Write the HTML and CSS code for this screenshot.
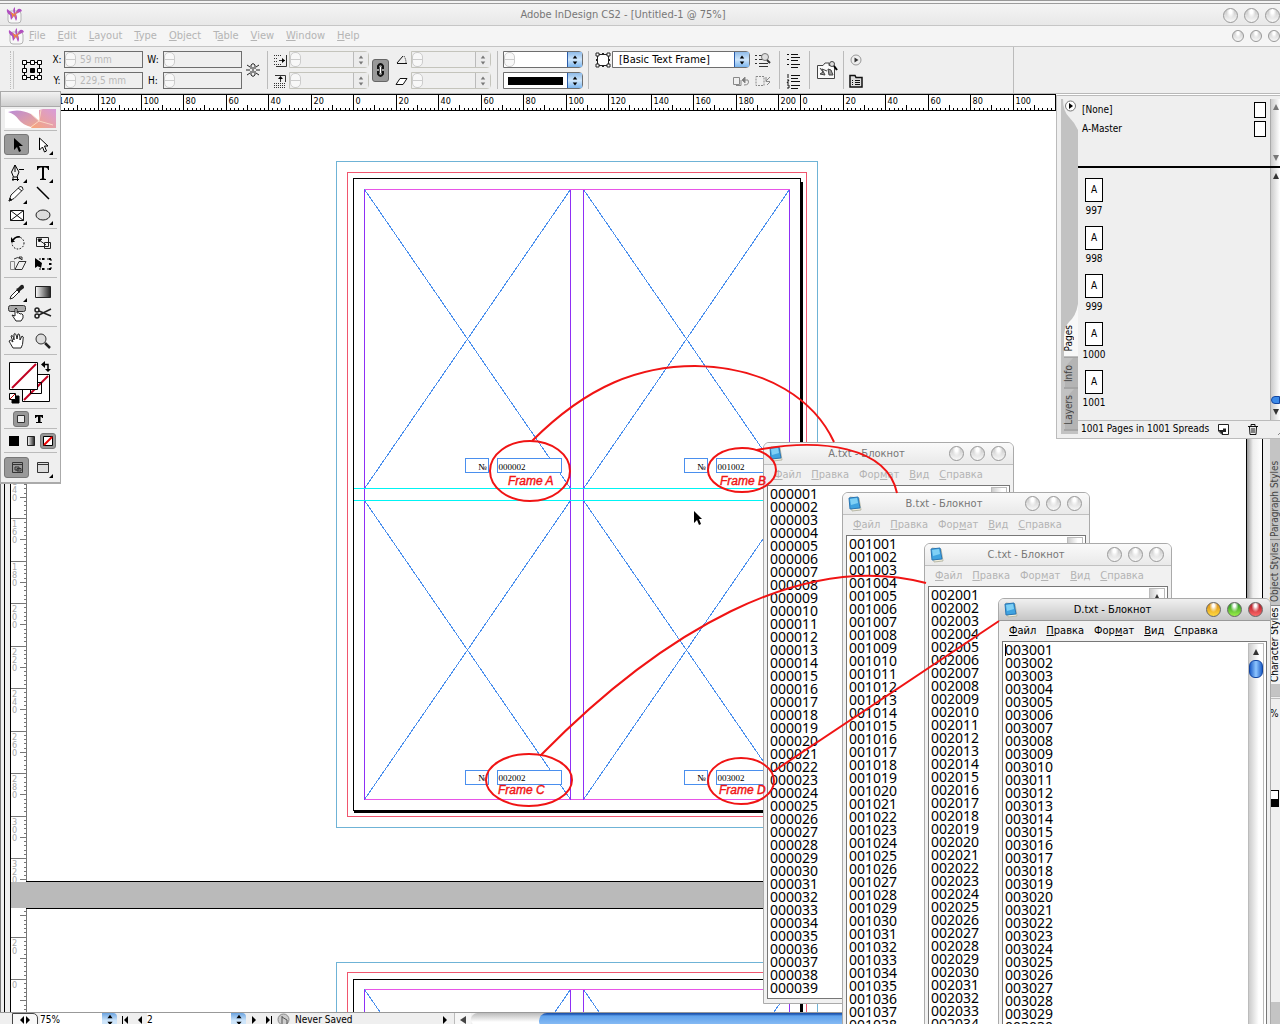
FILE: index.html
```html
<!DOCTYPE html>
<html lang="en">
<head>
<meta charset="utf-8">
<title>Adobe InDesign CS2 - [Untitled-1 @ 75%]</title>
<link rel="stylesheet" href="styles.css">
</head>
<body>
<svg class="defs" aria-hidden="true">
  <defs>
    <linearGradient id="metal" x1="0" y1="0" x2="1" y2="0"><stop offset="0" stop-color="#fff"/><stop offset="1" stop-color="#222"/></linearGradient>
    <linearGradient id="wing" x1="0" y1="0" x2="1" y2="1"><stop offset="0" stop-color="#b98ad8"/><stop offset="1" stop-color="#f3a98c"/></linearGradient>
    <linearGradient id="wing2" x1="0" y1="1" x2="1" y2="0"><stop offset="0" stop-color="#f7a677"/><stop offset="1" stop-color="#d79bdc"/></linearGradient>
    <symbol id="butterfly" viewBox="0 0 17 17">
      <rect x="2" y="4" width="13" height="12" rx="3" fill="#f8f8f8" stroke="#b5b5b5"/>
      <path d="M8 7L1 2Q0 6 4 8L5 13L8 9L10 14Q12 11 10 7L16 4Q15 1 12 2L9 6L9 0Q6 2 8 7Z" fill="#b04fc0"/>
      <path d="M8 7L4 5L6 8L6 11L8 8L10 11L9.500 7L13 4L9 6Z" fill="#f08a3c"/>
    </symbol>
    <symbol id="notepad" viewBox="0 0 16 16">
      <path d="M3 1L12 2L14 14L5 15Z" fill="#f4f0dc" stroke="#b9b9a8"/>
      <path d="M2 2L11 1L13 12L3 13Z" fill="#3fa3e0" stroke="#2a76b4"/>
      <path d="M3 3L10 2L11 7L4 9Z" fill="#7fd0f5"/>
    </symbol>
    <symbol id="up" viewBox="0 0 8 8"><path d="M4 1L7 7H1Z"/></symbol>
    <symbol id="updown" viewBox="0 0 8 14"><path d="M4 1L7 5H1ZM4 13L1 9H7Z"/></symbol>
    <symbol id="corner" viewBox="0 0 20 20"><path d="M20 16V20H16Z"/></symbol>
  </defs>
</svg>

<main class="app">
  <header class="title-bar">
    <svg class="app-icon"><use href="#butterfly"/></svg>
    <h1>Adobe InDesign CS2 - [Untitled-1 @ 75%]</h1>
    <div class="orbs"><button aria-label="Minimize"></button><button aria-label="Maximize"></button><button aria-label="Close"></button></div>
  </header>
  <nav class="menu-bar">
    <svg class="app-icon"><use href="#butterfly"/></svg>
    <a href="#"><u>F</u>ile</a><a href="#"><u>E</u>dit</a><a href="#"><u>L</u>ayout</a><a href="#"><u>T</u>ype</a><a href="#"><u>O</u>bject</a><a href="#">T<u>a</u>ble</a><a href="#"><u>V</u>iew</a><a href="#"><u>W</u>indow</a><a href="#"><u>H</u>elp</a>
    <div class="orbs small"><button aria-label="Minimize document"></button><button aria-label="Restore document"></button><button aria-label="Close document"></button></div>
  </nav>

  <section class="control-bar">
    <div class="grip both"></div>
    <svg class="both" width="20" height="20" fill="#fff" stroke="#000"><path d="M2.500 2.500H17.500V17.500H2.500Z" fill="none"/><path d="M.5 .5h4v4h-4zM8.500 .5h4v4h-4zM15.500 .5h4v4h-4zM.5 8.500h4v4h-4zM15.500 8.500h4v4h-4zM.5 15.500h4v4h-4zM8.500 15.500h4v4h-4zM15.500 15.500h4v4h-4z"/><path d="M8.500 8.500h4v4h-4z" fill="#000"/></svg>
    <label for="px">X:</label>
    <label for="py">Y:</label>
    <div class="field"><i></i><input id="px" value="59 mm"></div>
    <div class="field"><i></i><input id="py" value="229,5 mm"></div>
    <label for="pw">W:</label>
    <label for="ph">H:</label>
    <div class="field"><i></i><input id="pw"></div>
    <div class="field"><i></i><input id="ph"></div>
    <svg class="both" width="14" height="16" fill="none" stroke="#222"><path d="M5 7V3Q7 0 9 3V7M5 9V13Q7 16 9 13V9M7 5V11M1 3L4 5M13 3L10 5M0 8H4M10 8H14M1 13L4 11M13 13L10 11"/></svg>
    <hr class="both">
    <svg width="14" height="14" fill="none" stroke="#333"><path d="M1 2.500H9M1 5.500H5M1 8.500H5M1 11.500H9" stroke-dasharray="1 1"/><path d="M13.500 2V13.500H3M6 7.500H12"/><path d="M9 5L12 7.500L9 10Z" fill="#000" stroke="none"/></svg>
    <svg width="14" height="14" fill="none" stroke="#333"><path d="M1 9.500H13M1 11.500H13M1 13.500H13" stroke-dasharray="1 1"/><path d="M2 1.500H12.500V8M7.500 8V3"/><path d="M7.500 2L10 5H5Z" fill="#000" stroke="none"/></svg>
    <div class="field pale step"><i></i><input aria-label="Scale X"><svg><use href="#updown"/></svg></div>
    <div class="field pale step"><i></i><input aria-label="Scale Y"><svg><use href="#updown"/></svg></div>
    <button class="link both" aria-label="Constrain proportions"><svg width="9" height="14" fill="none"><path d="M2 6V3Q4.500 -1 7 3V6M2 8V11Q4.500 15 7 11V8M4.500 4V10" stroke="#111" stroke-width="2"/><path d="M4.500 4V10" stroke="#fff"/></svg></button>
    <svg width="13" height="12" fill="none" stroke="#111"><path d="M2 9.500H12M2 9L8 2"/><path d="M9 2Q11 5 11 9" stroke-dasharray="1 1"/></svg>
    <svg width="13" height="12" fill="#fff" stroke="#111"><path d="M1 9.500L5 3.500H12L8 9.500Z"/></svg>
    <div class="field pale step"><i></i><input aria-label="Rotation"><svg><use href="#updown"/></svg></div>
    <div class="field pale step"><i></i><input aria-label="Shear"><svg><use href="#updown"/></svg></div>
    <hr class="both">
    <div class="field blue"><i></i><input aria-label="Stroke weight"><svg><use href="#updown"/></svg></div>
    <div class="field blue stroke-type"><select aria-label="Stroke type"><option label=" "></option></select><svg><use href="#updown"/></svg></div>
    <hr class="both">
    <svg width="16" height="16" fill="#fff" stroke="#222"><path d="M2.500 2.500H13.500V13.500H2.500Z"/><path d="M1 1h3v3H1zM12 1h3v3h-3zM1 12h3v3H1zM12 12h3v3h-3zM7 1.500h2M7 14.500h2M1.500 7v2M14.500 7v2"/></svg>
    <span></span>
    <div class="field blue"><select aria-label="Object style"><option>[Basic Text Frame]</option></select><svg><use href="#updown"/></svg></div>
    <svg class="end" width="18" height="14" fill="none" stroke="#888"><path d="M1.500 3.500h6v7h-6zM4 11.500H9V6M11 6H16Q18 11 12 11"/><path d="M13 3L10 6L13 9Z" fill="#777"/></svg>
    <svg width="18" height="16" fill="none" stroke="#333"><path d="M1 3.500h2M5 3.500h5M1 7.500h2M5 7.500h6M1 11.500h2M5 11.500h9M5 14.500h9"/><circle cx="11" cy="5" r="3.500" fill="#ddd" stroke="#777"/><path d="M13 8L16 11" stroke-width="2"/></svg>
    <svg width="18" height="14" fill="none" stroke="#888"><path d="M2 2.500H10V11.500H2Z" stroke-dasharray="2 1"/><path d="M16 3L12 7M12 3V7.500H16M13 11L16 8"/></svg>
    <hr class="both">
    <svg width="16" height="16" fill="none" stroke="#111"><path d="M1 2.500h2M5 2.500h7M5 5.500h9M1 7.500h2M5 8.500h7M1 12.500h2M5 12.500h9M5 15.500h7"/></svg>
    <svg width="16" height="16" fill="none" stroke="#111"><path d="M2 1v4M1 7h2l-2 3h2M1 12h2v3H1M5 2.500h9M5 5.500h7M5 8.500h9M5 12.500h9M5 15.500h7"/></svg>
    <hr class="both">
    <svg class="both" width="22" height="20" fill="none" stroke="#444"><path d="M1.500 5.500H7L9 3H13V5.500H18.500V18.500H1.500Z" fill="#fafafa"/><path d="M4 8L7 12L4 14L9 15L6 9L11 11M12 9L13 15H17L15 10Z" fill="#999"/><circle cx="16" cy="4" r="2.500" fill="#ddd"/><path d="M18 6L21 10" stroke="#000" stroke-width="2"/></svg>
    <hr class="both">
    <svg width="12" height="12"><circle cx="6" cy="6" r="5" fill="#eee" stroke="#999"/><path d="M4.500 3.500V8.500L8.500 6Z" fill="#333"/></svg>
    <svg width="14" height="14" fill="#ddd" stroke="#111"><path d="M1 2.500V13H13V3.500H7L6 1.500H1Z" stroke-width="1.500"/><path d="M3 6.500h1M6 6.500h5M3 8.500h1M6 8.500h5M3 10.500h1M6 10.500h5"/></svg>
    <div class="bar-end both"></div>
  </section>

  <section class="document">
    <svg class="ruler-h" id="rulerH"></svg>
    <svg class="ruler-v" id="rulerV"></svg>
    <div class="canvas">
      <svg class="spread" shape-rendering="crispEdges" fill="none">
        <g transform="translate(-25.500 -110.500)">
          <g id="page">
            <path d="M336 161H817V827H336Z" stroke="#6fb3d6"/>
            <path d="M347 172H806V816H347Z" stroke="#f0566e"/>
            <path d="M353 178H800V810H353Z" stroke="#000"/>
            <path d="M353 811H802M801 181V811" stroke="#000" stroke-width="3"/>
            <path d="M364 189L570 488M570 189L364 488M583 189L789 488M789 189L583 488M364 500L570 799M570 500L364 799M583 500L789 799M789 500L583 799" stroke="#4a8fee"/>
            <path d="M364 189H789M364 799H789" stroke="#e755e7"/>
            <path d="M364 189V799M570 189V799M583 189V799M789 189V799" stroke="#8f2ff5"/>
          </g>
          <path d="M353 488H800M353 500H800" stroke="#00f4f4"/>
          <g stroke="#4a8fee" fill="#fff">
            <path d="M465 458H488V472H465ZM497 458H561V472H497ZM684 458H707V472H684ZM716 458H780V472H716ZM465 770H488V784H465ZM497 770H561V784H497ZM684 770H707V784H684ZM716 770H780V784H716Z"/>
          </g>
          <g class="serial">
            <text x="478" y="469">№</text><text x="498" y="469">000002</text>
            <text x="697" y="469">№</text><text x="717" y="469">001002</text>
            <text x="478" y="780">№</text><text x="498" y="780">002002</text>
            <text x="697" y="780">№</text><text x="717" y="780">003002</text>
          </g>
          <path d="M0 881H2000V908H0Z" fill="#bababa" stroke="#000"/>
          <g>
            <path d="M336 1100V962H817V1100" stroke="#6fb3d6"/>
            <path d="M347 1100V972H806V1100" stroke="#f0566e"/>
            <path d="M353 1100V979H800V1100" stroke="#000"/>
            <path d="M801 982V1100" stroke="#000" stroke-width="3"/>
            <path d="M364 989L570 1288M570 989L364 1288M583 989L789 1288M789 989L583 1288" stroke="#4a8fee"/>
            <path d="M364 989H789" stroke="#e755e7"/>
            <path d="M364 989V1100M570 989V1100M583 989V1100M789 989V1100" stroke="#8f2ff5"/>
          </g>
        </g>
      </svg>
    </div>
    <div class="doc-scroll"></div>
  </section>

  <footer class="status-bar">
    <button class="splitter" aria-label="Split"><svg width="12" height="10"><path d="M5 1V9L1 5ZM7 1V9L11 5Z"/></svg></button>
    <input class="zoom" aria-label="Zoom" value="75%">
    <button class="combo" aria-label="Zoom levels"><svg><use href="#updown"/></svg></button>
    <button aria-label="First page"><svg width="8" height="8"><path d="M1 0H2V8H1ZM7 0V8L3 4Z"/></svg></button>
    <button aria-label="Previous page"><svg width="6" height="8"><path d="M5 0V8L1 4Z"/></svg></button>
    <input class="page-no" aria-label="Page" value="2">
    <button class="combo" aria-label="Page list"><svg><use href="#updown"/></svg></button>
    <button aria-label="Next page"><svg width="6" height="8"><path d="M1 0V8L5 4Z"/></svg></button>
    <button aria-label="Last page"><svg width="8" height="8"><path d="M1 0V8L5 4ZM6 0H7V8H6Z"/></svg></button>
    <svg class="state" width="13" height="13"><circle cx="6.500" cy="6.500" r="5.500" fill="#ccc" stroke="#888"/><path d="M5 3V12M5 4L10 7V12" fill="none" stroke="#555"/></svg>
    <span class="saved">Never Saved</span>
    <button aria-label="Status menu"><svg width="6" height="8"><path d="M1 0V8L5 4Z"/></svg></button>
    <button class="scroll-left" aria-label="Scroll left"><svg width="8" height="8"><path d="M7 0V8L1 4Z" fill="#444"/></svg></button>
    <div class="h-track"><div class="h-thumb"></div></div>
  </footer>
</main>

<aside class="side-dock">
  <span class="tab">Paragraph Styles</span>
  <span class="tab">Object Styles</span>
  <span class="tab active">Character Styles</span>
  <div class="dock-body"><span>%</span><i></i></div>
</aside>

<aside class="pages-panel">
  <div class="tabs">
    <svg viewBox="0 0 17 335">
      <path d="M0 0H17V335H0Z" fill="#c2c2c2"/>
      <path d="M2 0H17V31Q14 24 8 18Q2 12 2 0Z" fill="#efefef"/>
      <path d="M17 205Q15 217 8 223Q3 228 3 238V258H17Z" fill="#f8f8f8"/>
      <path d="M3 258H17M3 289H17M3 331H17" stroke="#888"/>
      <path d="M4 268L12 259H17V288H4Z" fill="#b4b4b4"/><path d="M4 300L13 290H17V330H4Z" fill="#b4b4b4"/>
      <circle cx="9.500" cy="7" r="5" fill="#fff" stroke="#777"/><path d="M8 4V10L12 7Z"/>
    </svg>
    <span class="t-pages">Pages</span><span class="t-info">Info</span><span class="t-layers">Layers</span>
  </div>
  <div class="masters">
    <div><span>[None]</span><b></b></div>
    <div><span>A-Master</span><b></b></div>
  </div>
  <ul class="spreads">
    <li><b>A</b>997</li><li><b>A</b>998</li><li><b>A</b>999</li><li><b>A</b>1000</li><li><b>A</b>1001</li>
  </ul>
  <div class="strip s1"><svg><use href="#up"/></svg><svg class="flip"><use href="#up"/></svg></div>
  <div class="strip s2"><svg><use href="#up"/></svg><i></i><svg class="flip"><use href="#up"/></svg></div>
  <div class="panel-foot">
    <span>1001 Pages in 1001 Spreads</span>
    <button aria-label="New page"><svg width="11" height="11"><path d="M1 .5H10.500V10.500H4L.5 7V.5Z" fill="#fff" stroke="#222"/><path d="M5 4.500H8V8H5ZM0 6H5V11Z" fill="#222"/></svg></button>
    <button aria-label="Delete page"><svg width="12" height="12" fill="none" stroke="#111"><path d="M1 3.500H11M4 3V1.500H8V3M2.500 4L3 11.500H9L9.500 4M5 5V10M7 5V10"/></svg></button>
    <svg class="sizer" width="11" height="11" stroke="#888"><path d="M1 11L11 1M6 11L11 6"/></svg>
  </div>
</aside>

<aside class="toolbox">
  <div class="tb-title"></div>
  <svg class="logo" viewBox="0 0 51 19"><rect width="51" height="19" fill="#fff"/><path d="M3 3Q14 -1 26 5L34 12L26 18Q18 16 14 11Q10 5 3 3Z" fill="url(#wing)"/><path d="M34 12L34 1L38 0H51V19H26L28 15Z" fill="url(#wing2)"/><path d="M26 5L34 12L36 1M34 12L26 18M34 12L48 16" stroke="#f9d6c4" fill="none"/></svg>
  <div class="tools">
    <button class="on" aria-label="Selection"><svg viewBox="0 0 20 20"><path d="M7 3V15L10 12L12 17L14 16L12 11H16Z"/></svg></button>
    <button aria-label="Direct selection"><svg viewBox="0 0 20 20"><path d="M6.500 3V15L9.500 12L11.500 17L13.500 16L11.500 11H15Z" fill="#fff" stroke="#000"/><use href="#corner"/></svg></button>
  </div>
  <div class="tools">
    <button aria-label="Pen"><svg viewBox="0 0 20 20" fill="none" stroke="#000"><path d="M8 2L4.500 9L6.500 14H10L12 9ZM8 2V9M6 14V18M10.500 14V18M5 16.500H12M12 6.500H17" /><use href="#corner" fill="#000" stroke="none"/></svg></button>
    <button aria-label="Type"><svg viewBox="0 0 20 20"><path d="M4 3H16V7H15Q15 4.500 12 4.500H11V15Q11 16 13 16V17H7V16Q9 16 9 15V4.500H8Q5 4.500 5 7H4Z"/><use href="#corner"/></svg></button>
    <button aria-label="Pencil"><svg viewBox="0 0 20 20"><path d="M2 17L4 11L13 2.500Q16 2 16 5.500L7 14.500Z" fill="#fff" stroke="#222"/><path d="M2 17L3 14L5 16ZM11 4L15 7" stroke="#222"/><use href="#corner"/></svg></button>
    <button aria-label="Line"><svg viewBox="0 0 20 20"><path d="M4 3L16 15" stroke="#000" stroke-width="1.500"/></svg></button>
    <button aria-label="Frame"><svg viewBox="0 0 20 20"><path d="M3.500 5.500H16.500V15.500H3.500ZM3.500 5.500L16.500 15.500M16.500 5.500L3.500 15.500" fill="#fff" stroke="#111"/><use href="#corner"/></svg></button>
    <button aria-label="Ellipse"><svg viewBox="0 0 20 20"><ellipse cx="10" cy="10" rx="7" ry="5" fill="#ddd" stroke="#222"/><use href="#corner"/></svg></button>
  </div>
  <div class="tools">
    <button aria-label="Rotate"><svg viewBox="0 0 20 20" fill="none" stroke="#000"><circle cx="11" cy="10" r="6" stroke-dasharray="1.500 1.500"/><path d="M6 7Q9 3 13 4" stroke-width="1.500"/><path d="M4 4V9H8Z" fill="#000" stroke="none"/></svg></button>
    <button aria-label="Scale"><svg viewBox="0 0 20 20" fill="none" stroke="#222"><path d="M3.500 4.500H15.500V13.500H3.500Z" fill="#f4f4f4"/><path d="M11.500 9.500H17.500V15.500H11.500ZM6 7L13 12"/><path d="M5 6H9L6 9Z" fill="#000"/></svg></button>
    <button aria-label="Shear"><svg viewBox="0 0 20 20" fill="none" stroke="#333"><path d="M3.500 7.500H7.500V15.500H3.500Z" stroke="#888"/><path d="M8 15.500L12 7.500H19L15 15.500Z"/><path d="M7 5Q11 2 14 5M12 3L15 6V3Z"/></svg></button>
    <button aria-label="Free transform"><svg viewBox="0 0 20 20"><path d="M6 5H18V15H6Z" fill="none" stroke="#000" stroke-dasharray="2 2"/><path d="M2 4V14L5 12L8 14L9 9ZM9 4h2v2H9zM16 4h2v2h-2zM16 14h2v2h-2zM9 14h2v2H9zM16 9h2v2h-2z"/></svg></button>
  </div>
  <div class="tools">
    <button aria-label="Eyedropper"><svg viewBox="0 0 20 20"><path d="M3 17L4 14L10 8L12 10L6 16Z" fill="#fff" stroke="#222"/><path d="M9 7L11 6L14 3Q17 2 17 6L13 9L13 11Z" fill="#222"/><use href="#corner"/></svg></button>
    <button aria-label="Gradient"><svg viewBox="0 0 20 20"><path d="M2.500 4.500H17.500V15.500H2.500Z" fill="url(#metal)" stroke="#222"/></svg></button>
    <button aria-label="Button"><svg viewBox="0 0 20 20"><rect x="1.500" y="2.500" width="17" height="6" rx="2" fill="#aaa" stroke="#333"/><path d="M5 12L8 13V6Q9 4 10 6V10Q12 9 13 11Q15 10 16 12V15L14 18H9Z" fill="#fff" stroke="#222"/></svg></button>
    <button aria-label="Scissors"><svg viewBox="0 0 20 20" fill="none" stroke="#222" stroke-width="1.500"><circle cx="4" cy="7" r="2"/><circle cx="4" cy="13" r="2"/><path d="M6 8L18 13M6 12L18 6"/></svg></button>
  </div>
  <div class="tools">
    <button aria-label="Hand"><svg viewBox="0 0 20 20"><path d="M6 17Q3 12 2 10Q3 8 6 11L4 5Q6 3 7 9L7 3Q9 1 10 8L11 3Q13 2 13 9L15 5Q17 5 16 9Q16 14 14 17Z" fill="#fff" stroke="#222"/></svg></button>
    <button aria-label="Zoom"><svg viewBox="0 0 20 20"><circle cx="8" cy="8" r="5" fill="#ddd" stroke="#333"/><path d="M12 12L17 17" stroke="#222" stroke-width="2.500"/></svg></button>
  </div>
  <div class="fill-stroke">
    <svg viewBox="0 0 46 46" stroke="#000" fill="#fff"><path d="M14.500 14.500H41.500V41.500H14.500Z"/><path d="M16 40L40 16" stroke="#c00020" stroke-width="2"/><path d="M22.500 22.500H33.500V33.500H22.500Z" fill="none"/><path d="M1.500 2.500H29.500V29.500H1.500Z"/><path d="M4 28L28 4" stroke="#c00020" stroke-width="2"/><path d="M36 4.500H40V11" fill="none" stroke-width="1.500"/><path d="M33 4.500L37 1V8ZM40 12L37 9H43Z" fill="#000" stroke="none"/><path d="M4 36H11V43H4Z" fill="#000"/><path d="M1.500 33.500H7.500V39.500H1.500Z"/><path d="M2 39L7 34" stroke="#c00"/></svg>
  </div>
  <div class="pair"><button class="on" aria-label="Format container"><svg viewBox="0 0 14 14"><path d="M3.500 3.500H10.500V10.500H3.500Z" fill="#eee" stroke="#333"/></svg></button><button aria-label="Format text"><svg viewBox="0 0 14 14"><path d="M3 3H11V6H10Q10 4.500 8.500 4.500V10H10V11H4V10H6V4.500Q4 4.500 4 6H3Z"/></svg></button></div>
  <div class="trio"><button aria-label="Color"><svg viewBox="0 0 14 14"><path d="M2 2H12V12H2Z"/></svg></button><button aria-label="Apply gradient"><svg viewBox="0 0 14 14"><path d="M3.500 2.500H10.500V11.500H3.500Z" fill="url(#metal)" stroke="#222"/></svg></button><button class="on" aria-label="None"><svg viewBox="0 0 14 14"><path d="M2.500 2.500H11.500V11.500H2.500Z" fill="#fff" stroke="#000"/><path d="M3 11L11 3" stroke="#e00" stroke-width="2"/></svg></button></div>
  <div class="tools view">
    <button class="on" aria-label="Normal view"><svg viewBox="0 0 20 20" fill="none" stroke="#333"><path d="M5.500 4.500H15.500V14.500H5.500ZM5 6.500H16M8 9H12V12H8ZM10 10.500H14V13H10Z"/></svg></button>
    <button aria-label="Preview"><svg viewBox="0 0 20 20"><path d="M4.500 4.500H15.500V14.500H4.500Z" fill="#ddd" stroke="#333"/><path d="M4 6.500H16" stroke="#333"/><use href="#corner"/></svg></button>
  </div>
</aside>

<section class="note note-a">
  <header><svg class="note-icon"><use href="#notepad"/></svg><h2>A.txt - Блокнот</h2><div class="orbs"><button aria-label="Minimize"></button><button aria-label="Maximize"></button><button aria-label="Close"></button></div></header>
  <nav><a href="#"><u>Ф</u>айл</a><a href="#"><u>П</u>равка</a><a href="#">Фор<u>м</u>ат</a><a href="#"><u>В</u>ид</a><a href="#"><u>С</u>правка</a></nav>
  <div class="note-body"><textarea aria-label="A.txt" data-from="1" data-count="39"></textarea><div class="v-scroll"><svg><use href="#up"/></svg></div></div>
</section>
<section class="note note-b">
  <header><svg class="note-icon"><use href="#notepad"/></svg><h2>B.txt - Блокнот</h2><div class="orbs"><button aria-label="Minimize"></button><button aria-label="Maximize"></button><button aria-label="Close"></button></div></header>
  <nav><a href="#"><u>Ф</u>айл</a><a href="#"><u>П</u>равка</a><a href="#">Фор<u>м</u>ат</a><a href="#"><u>В</u>ид</a><a href="#"><u>С</u>правка</a></nav>
  <div class="note-body"><textarea aria-label="B.txt" data-from="1001" data-count="38"></textarea><div class="v-scroll"><svg><use href="#up"/></svg></div></div>
</section>
<section class="note note-c">
  <header><svg class="note-icon"><use href="#notepad"/></svg><h2>C.txt - Блокнот</h2><div class="orbs"><button aria-label="Minimize"></button><button aria-label="Maximize"></button><button aria-label="Close"></button></div></header>
  <nav><a href="#"><u>Ф</u>айл</a><a href="#"><u>П</u>равка</a><a href="#">Фор<u>м</u>ат</a><a href="#"><u>В</u>ид</a><a href="#"><u>С</u>правка</a></nav>
  <div class="note-body"><textarea aria-label="C.txt" data-from="2001" data-count="34"></textarea><div class="v-scroll"><svg><use href="#up"/></svg></div></div>
</section>
<section class="note note-d current">
  <header><svg class="note-icon"><use href="#notepad"/></svg><h2>D.txt - Блокнот</h2><div class="orbs"><button aria-label="Minimize"></button><button aria-label="Maximize"></button><button aria-label="Close"></button></div></header>
  <nav><a href="#"><u>Ф</u>айл</a><a href="#"><u>П</u>равка</a><a href="#">Фор<u>м</u>ат</a><a href="#"><u>В</u>ид</a><a href="#"><u>С</u>правка</a></nav>
  <div class="note-body"><textarea aria-label="D.txt" data-from="3001" data-count="30"></textarea><div class="v-scroll"><svg><use href="#up"/></svg><i></i></div></div>
</section>

<svg class="callouts">
  <g fill="none" stroke="#f01414" stroke-width="2">
    <ellipse cx="530" cy="471" rx="40" ry="30"/>
    <ellipse cx="742" cy="470" rx="34" ry="22"/>
    <ellipse cx="529" cy="780" rx="43" ry="26"/>
    <ellipse cx="741" cy="781" rx="33" ry="23"/>
    <path d="M532 441C588 385 640 366 695 366C768 367 815 401 834 442"/>
    <path d="M757 450C820 438 887 446 897 493"/>
    <path d="M541 755C660 634 800 550 926 583"/>
    <path d="M774 771L999 621"/>
  </g>
  <text x="508" y="485">Frame A</text>
  <text x="720" y="485">Frame B</text>
  <text x="498" y="794">Frame C</text>
  <text x="719" y="794">Frame D</text>
  <path d="M694 511V523L697 520L699 525L701 524L699 519H702Z" fill="#000"/>
  <path d="M1005.500 644V656" stroke="#000"/>
</svg>
<script src="app.js"></script>
</body>
</html>
```
FILE: styles.css
```css
* { box-sizing: border-box; }
body {
  margin: 0; height: 100vh; overflow: hidden; position: relative;
  font: 11px/14px "DejaVu Sans Condensed", "Noto Sans", sans-serif;
  color: #000; background: #efefef;
}
button { border: 0; padding: 0; margin: 0; background: none; display: flex; align-items: center; justify-content: center; }
input, select, textarea { font: inherit; border: 0; padding: 0; margin: 0; outline: 0; background: none; min-width: 0; border-radius: 0; }
a { color: inherit; text-decoration: none; }
h1, h2, ul { margin: 0; padding: 0; font: inherit; list-style: none; }
svg { display: block; flex: none; }
.defs { position: absolute; width: 0; height: 0; }

/* application frame */
.app { height: 100%; display: flex; flex-direction: column; }
.title-bar {
  height: 26px; flex: none; display: flex; align-items: center; padding: 4px 0 0 6px;
  border-top: 1px solid #999; border-bottom: 1px solid #c6c6c6;
  background: linear-gradient(#f4f4f4 2px, #9c9c9c 2px, #9c9c9c 3px, #f4f4f4 3px, #e8e8e8);
}
.title-bar h1 { flex: 1; text-align: center; color: #777; font-size: 11px; }
.app-icon { width: 17px; height: 17px; }
.orbs { display: flex; gap: 6px; }
.orbs button {
  width: 15px; height: 15px; border-radius: 50%; border: 1px solid #999;
  background: radial-gradient(ellipse at 50% 20%, #fff 15%, transparent 45%), linear-gradient(#c4c4c4, #e0e0e0 50%, #f8f8f8);
}
.orbs.small { gap: 6px; margin-left: auto; }
.orbs.small button { width: 12px; height: 12px; }
.menu-bar {
  height: 21px; flex: none; display: flex; align-items: center; gap: 12px; padding-left: 8px;
  background: #f5f5f5; border-bottom: 1px solid #c4c4c4; color: #b4b4b4;
}
.menu-bar .app-icon { margin-right: -8px; }

.control-bar {
  flex: none; height: 47px; padding-top: 4px; background: #efefef;
  display: grid; grid-auto-flow: column; grid-template-rows: 17px 17px; row-gap: 4px; align-items: center; justify-items: center;
  grid-template-columns: 14px 36px 14px 79px 20px 79px 22px 6px 19px 80px 23px 19px 80px 12px 80px 10px 19px 138px 26px 6px 23px 8px 27px 6px 20px 148px;
  border-bottom: 1px solid #b8b8b8;
}
.both { grid-row: span 2; }
.end { justify-self: end; }
.control-bar > label { font-size: 10px; }
.control-bar hr { margin: 0; border: 0; border-left: 1px solid #bbb; height: 38px; }
.grip { width: 4px; height: 38px; justify-self: end; border-right: 1px solid #c8c8c8; border-left: 1px dotted #bbb; }
.bar-end { align-self: stretch; justify-self: stretch; margin: -4px 0; border-right: 1px solid #bbb; }
.link { width: 17px; height: 23px; background: #999; border: 1px solid #666; border-radius: 3px; }
.field { width: 100%; height: 17px; display: flex; align-items: center; border: 1px solid #6e6e6e; background: #efefef; }
.field i { width: 11px; height: 15px; flex: none; margin-right: 4px; border: 1px solid #ccc; border-radius: 5px; background: linear-gradient(#f8f8f8 45%, #ccc 45%, #ccc 52%, #f8f8f8 52%); }
.field input { flex: 1; width: 20px; height: 15px; color: #b8b8b8; font-size: 10px; }
.field.pale { border-color: #c4c4bc; }
.field > svg { width: 15px; height: 15px; padding: 2px 4px 1px; background: #ececec; border-left: 1px solid #bbb; }
.field.step > svg { fill: #777; }
.field.step { border-radius: 0 4px 4px 0; }
.field.blue > svg { background: linear-gradient(#8fbbe8, #cfe6fb 50%, #7db6ee); border-left: 1px solid #2a5caa; }
.field.blue { background: #fff; border-radius: 0 4px 4px 0; }
.field select { appearance: none; flex: 1; height: 15px; padding-left: 6px; color: #000; }
.field.stroke-type select { background: linear-gradient(#000, #000) 4px 4px / 55px 8px no-repeat; }

/* document window */
.document {
  flex: 1; min-height: 0; background: #fff; overflow: hidden;
  display: grid; grid-template: 17px 1fr / 26px 1fr 34px;
}
.ruler-h { grid-column: 1 / 4; width: calc(100% - 224px); height: 17px; background: #fff; border: 1px solid #000; border-width: 1px 1px 1px 0; overflow: hidden; }
.ruler-v { width: 27px; height: 100%; overflow: hidden; }
.canvas { overflow: hidden; min-width: 0; min-height: 0; }
.spread { width: 100%; height: 100%; }
.doc-scroll { border-left: 1px solid #000; background: linear-gradient(90deg, #999, #eee 6px, #fff 15px, #000 15px, #000 16px, #efefef 16px); }
.ruler-h text { font-size: 9px; }
.ruler-v text { font-size: 9px; fill: #a9a9a9; }
.serial text { font: 9px "Liberation Serif", serif; fill: #000; }

.status-bar {
  height: 12px; flex: none; overflow: hidden; display: flex; align-items: flex-start;
  padding-left: 12px; background: #efefef; border-top: 1px solid #999; font-size: 10px;
}
.status-bar > * { height: 13px; flex: none; }
.status-bar button { width: 15px; }
.status-bar .splitter { width: 26px; border: 1px solid #444; border-radius: 0 5px 0 0; background: #f8f8f8; margin-right: 2px; }
.status-bar input { background: #fff; }
.status-bar .zoom { width: 62px; }
.status-bar .page-no { width: 84px; }
.status-bar .combo { background: linear-gradient(#6ba4e0, #cfe6fb 60%); border-radius: 0 4px 0 0; }
.combo svg { width: 8px; height: 12px; }
.state { margin: 0 5px 0 1px; }
.saved { width: 142px; }
.status-bar .scroll-left { margin-left: 2px; width: 17px; border-left: 1px solid #bbb; background: #f6f6f6; }
.status-bar .h-track { flex: 1; padding-left: 68px; border-radius: 8px 0 0 8px; background: linear-gradient(#bbb, #fff 9px); }
.h-thumb { height: 16px; border-radius: 8px; background: linear-gradient(#1d55b0 1px, #5fa2ec 3px, #9cc8f8); }

/* floating toolbox */
.toolbox { position: absolute; left: 0; top: 91px; width: 61px; background: #efefef; border: 1px solid #aaa; border-width: 1px 1px 2px 1px; padding: 0 3px; }
.tb-title { height: 15px; margin: 0 -3px; background: linear-gradient(#f2f2f2, #cfcfcf); border-bottom: 1px solid #aaa; }
.logo { width: 51px; height: 19px; margin: 2px 1px 2px; }
.tools { border-top: 1px solid #bbb; padding: 3px 0; display: grid; grid-template-columns: 26px 26px; grid-auto-rows: 21px; }
.tools button svg { width: 20px; height: 20px; }
.tools .on, .pair .on, .trio .on { background: #999; border: 1px solid #777; border-radius: 3px; }
.tools .on { width: 25px; }
.view { padding: 4px 0; }
.fill-stroke { border-top: 1px solid #bbb; height: 54px; padding: 5px 4px; }
.fill-stroke svg { width: 46px; height: 46px; }
.pair, .trio { border-top: 1px solid #bbb; display: flex; align-items: center; }
.pair { height: 20px; padding-left: 9px; gap: 2px; }
.trio { height: 24px; padding-left: 2px; gap: 1px; }
.pair button, .trio button { width: 16px; height: 16px; }
.pair svg, .trio svg { width: 14px; height: 14px; }

/* pages panel */
.pages-panel {
  position: absolute; right: 0; top: 95px; width: 224px; height: 344px; font-size: 10px;
  display: grid; grid-template: 69px 1fr 17px / 17px 1fr 10px;
  padding: 3px 0 1px 4px; background: #efefef; border: 1px solid #bbb; border-right: 0;
}
.tabs { grid-row: 1 / 4; position: relative; }
.tabs svg { width: 17px; height: 335px; }
.tabs span { position: absolute; left: 1px; writing-mode: vertical-rl; transform: rotate(180deg); }
.t-pages { top: 226px; } .t-info { top: 266px; color: #444; } .t-layers { top: 296px; color: #444; }
.masters { grid-column: 2 / 4; grid-row: 1; padding: 1px 14px 0 4px; border-bottom: 2px solid #000; }
.masters div { display: flex; justify-content: space-between; align-items: center; height: 19px; }
.masters b, .spreads b { border: 1px solid #000; background: #fff; font-weight: 400; }
.masters b { width: 12px; height: 16px; }
.spreads { grid-column: 2; grid-row: 2; padding: 10px 0 0 4px; }
.spreads li { width: 24px; height: 48px; display: flex; flex-direction: column; align-items: center; gap: 2px; }
.spreads b { width: 18px; height: 24px; display: flex; align-items: center; justify-content: center; }
.strip { grid-column: 3; display: flex; flex-direction: column; justify-content: space-between; align-items: center; padding: 4px 0; border-left: 1px solid #aaa; background: linear-gradient(90deg, #ccc, #fff); fill: #333; }
.s1 { grid-row: 1; margin-bottom: 2px; fill: #777; } .s2 { grid-row: 2; }
.strip svg { width: 8px; height: 8px; }
.strip i { width: 9px; height: 8px; margin-top: auto; margin-bottom: 4px; border-radius: 4px 0 0 4px; background: #3c8ae8; border: 1px solid #1446a0; }
.flip { transform: rotate(180deg); }
.panel-foot { grid-column: 2 / 4; grid-row: 3; display: flex; align-items: center; gap: 18px; padding-left: 3px; border-top: 1px solid #bbb; }
.panel-foot span { width: 119px; white-space: nowrap; }
.panel-foot .sizer { margin-left: auto; }

/* docked styles palette */
.side-dock { position: absolute; right: 0; top: 438px; bottom: 0; width: 13px; padding-top: 20px; background: #c4c4c4; border-left: 3px solid #efefef; display: flex; flex-direction: column; font-size: 10px; line-height: 10px; }
.tab { writing-mode: vertical-rl; transform: rotate(180deg); height: 82px; width: 10px; text-align: center; white-space: nowrap; color: #444; border-top: 1px solid #888; }
.tab:nth-child(2) { height: 66px; }
.tab.active { background: #f5f5f5; color: #000; height: 78px; border: 0; }
.dock-body { flex: 1; margin-top: 12px; margin-bottom: 22px; background: #efefef; border-top: 3px double #bbb; }
.dock-body span { display: block; padding: 10px 0 0 0; }
.dock-body i { display: block; width: 9px; height: 17px; margin-top: 71px; border: 1px solid #000; background: linear-gradient(#fff 8px, #000 8px); }

/* notepad windows */
.note { position: absolute; display: flex; flex-direction: column; padding: 0 4px 4px; background: #f1f1f1; border: 1px solid #aaa; border-radius: 6px 6px 0 0; color: #b4b4b4; }
.note-a { left: 763px; top: 442px; width: 251px; bottom: 20px; }
.note-b { left: 842px; top: 492px; width: 248px; bottom: -20px; }
.note-c { left: 924px; top: 543px; width: 248px; bottom: -20px; }
.note-d { left: 998px; top: 598px; width: 273px; bottom: -20px; }
.note header { height: 22px; flex: none; margin: 0 -4px; padding: 0 7px 0 4px; display: flex; align-items: center; border-bottom: 1px solid #c0c0c0; border-radius: 5px 5px 0 0; background: linear-gradient(#fafafa, #e9e9e9); }
.note-icon { width: 16px; height: 16px; }
.note h2 { flex: 1; text-align: center; color: #777; }
.note nav { height: 20px; flex: none; display: flex; align-items: center; gap: 10px; padding-left: 6px; }
.note-body { flex: 1; min-height: 0; display: flex; margin: 0 -1px; border: 1px solid #777; background: #fff; padding: 1px 2px; }
.note textarea { flex: 1; resize: none; overflow: hidden; color: #000; font: 14px/13px "Noto Sans", sans-serif; }
.v-scroll { width: 16px; border: 1px solid #bbb; background: linear-gradient(90deg, #ccc, #fff 70%); padding: 4px 0; fill: #333; display: flex; flex-direction: column; align-items: center; gap: 4px; }
.v-scroll svg { width: 8px; height: 8px; }
.v-scroll i { width: 14px; height: 18px; border-radius: 6px; border: 1px solid #1446a0; background: linear-gradient(90deg, #1e5fc8, #8fc6ff 50%, #1e5fc8); }
.current { color: #000; }
.current header { background: linear-gradient(#f0f0f0, #c6c6c6); border-color: #999; }
.current h2 { color: #000; }
.current .orbs button { border-color: #666; }
.current .orbs button:nth-child(1) { background: radial-gradient(ellipse at 50% 20%, #fff 10%, transparent 45%), linear-gradient(#d98a10, #ffd940); }
.current .orbs button:nth-child(2) { background: radial-gradient(ellipse at 50% 20%, #fff 10%, transparent 45%), linear-gradient(#1f8f1f, #9df04a); }
.current .orbs button:nth-child(3) { background: radial-gradient(ellipse at 50% 20%, #fff 10%, transparent 45%), linear-gradient(#a80f1c, #ff6a6a); }

.callouts { position: absolute; left: 0; top: 0; width: 100%; height: 100%; pointer-events: none; }
.callouts text { font: italic 12px "Liberation Sans", Arial, sans-serif; fill: #f01414; stroke: #f01414; stroke-width: .4px; }
```
FILE: app.js
```js
const NS = 'http://www.w3.org/2000/svg';
const STEP = 42.5; // pixels per 20 mm at 75% zoom

function add(parent, name, attrs, text) {
  const el = document.createElementNS(NS, name);
  for (const key in attrs) el.setAttribute(key, attrs[key]);
  if (text !== undefined) el.textContent = text;
  parent.appendChild(el);
}

function drawHorizontal(svg) {
  let d = '';
  const run = (origin, from, to) => {
    for (let i = from; i <= to; i++) {
      const x = Math.round(origin + i * STEP / 10) + 0.5;
      d += `M${x} ${i % 10 === 0 ? 0 : i % 5 === 0 ? 10 : 13}V16`;
      if (i % 10 === 0) add(svg, 'text', { x: x + 2, y: 9 }, Math.abs(i * 2));
    }
  };
  run(353, -70, 104);
  run(800, 0, 59);
  add(svg, 'path', { d, stroke: '#000' });
}

function drawVertical(svg) {
  const top = 111;
  let d = '';
  const run = (origin, from, to) => {
    for (let i = from; i <= to; i++) {
      const y = Math.round(origin + i * STEP / 10) - top + 0.5;
      d += `M${i % 10 === 0 ? 11 : i % 5 === 0 ? 20 : 24} ${y}H27`;
      if (i % 10 === 0) {
        String(Math.abs(i * 2)).split('').forEach((c, n) =>
          add(svg, 'text', { x: 12, y: y + 8 + n * 8 }, c));
      }
    }
  };
  run(178, 70, 165);
  run(979, -16, 7);
  add(svg, 'path', { d, stroke: '#777' });
  add(svg, 'path', { d: 'M0 0H11V2000H0Z', fill: '#efefef' });
  add(svg, 'path', { d: 'M11 771H26V797H11Z', fill: '#bababa' });
  add(svg, 'path', { d: 'M0.5 0V2000M26.5 0V2000', stroke: '#777' });
  add(svg, 'path', { d: 'M4.5 0V2000M10.5 0V2000', stroke: '#000' });
}

drawHorizontal(document.getElementById('rulerH'));
drawVertical(document.getElementById('rulerV'));

document.querySelectorAll('textarea[data-from]').forEach((area) => {
  const first = Number(area.dataset.from);
  const lines = [];
  for (let i = 0; i < Number(area.dataset.count); i++) {
    lines.push(String(first + i).padStart(6, '0'));
  }
  area.textContent = lines.join('\n');
});
```
